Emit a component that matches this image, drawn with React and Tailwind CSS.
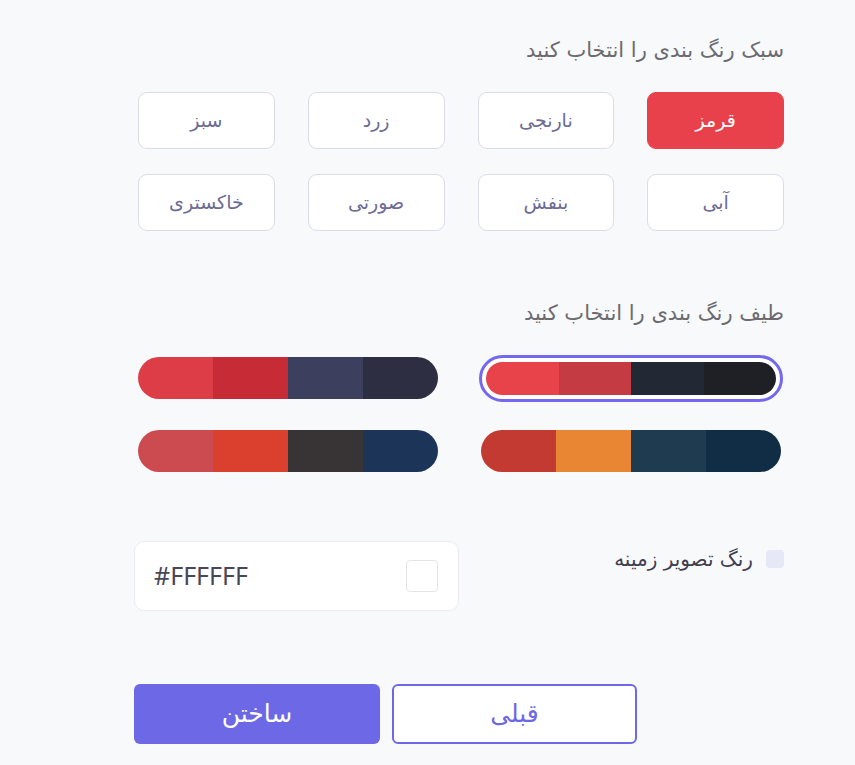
import React from "react";

const styles = [
  { label: "قرمز", active: true },
  { label: "نارنجی" },
  { label: "زرد" },
  { label: "سبز" },
  { label: "آبی" },
  { label: "بنفش" },
  { label: "صورتی" },
  { label: "خاکستری" },
];

const palettes = [
  { colors: ["#e8424b", "#c53b44", "#222834", "#1f2026"], selected: true },
  { colors: ["#dc3d47", "#c72b35", "#3d3f5f", "#2d2e42"] },
  { colors: ["#c33a32", "#e88633", "#1f3b4f", "#112d45"] },
  { colors: ["#cb4b51", "#db3f2d", "#383435", "#1d3459"] },
];

function Bar({ colors, className }) {
  // colors run from the right end of the bar to the left
  return (
    <div className={"flex flex-row-reverse overflow-hidden rounded-full " + className}>
      {colors.map((c, i) => (
        <div key={i} className="flex-1" style={{ backgroundColor: c }} />
      ))}
    </div>
  );
}

export default function App() {
  return (
    <div
      dir="rtl"
      className="min-h-[765px] w-full bg-[#f8f9fb]"
      style={{ fontFamily: '"DejaVu Sans", "Noto Sans", sans-serif' }}
    >
      <div className="mr-[71px] w-[650px] pt-[34px]">
        <h2 className="text-[21px] leading-[32px] text-[#6b6b6f]">سبک رنگ بندی را انتخاب کنید</h2>

        <div className="mt-[26px] grid w-[646px] grid-cols-4 gap-x-[33px] gap-y-[25px]">
          {styles.map((s) => (
            <button
              key={s.label}
              className={
                "flex h-[57px] items-center justify-center rounded-[9px] border text-[19px] " +
                (s.active
                  ? "border-[#e8414b] bg-[#e8414b] text-white"
                  : "border-[#dcdce8] bg-white text-[#6b6b95]")
              }
            >
              {s.label}
            </button>
          ))}
        </div>

        <h2 className="mt-[66px] text-[21px] leading-[32px] text-[#6b6b6f]">طیف رنگ بندی را انتخاب کنید</h2>

        <div className="mt-[28px] grid grid-cols-[300px_300px] gap-x-[43px] gap-y-[31px] pr-[3px]">
          {palettes.map((p, i) => (
            <div key={i} className="flex h-[42px] items-center justify-center">
              {p.selected ? (
                <div className="box-border flex h-[47px] w-[304px] shrink-0 rounded-full border-[3px] border-[#7468ee] bg-white p-[4px]">
                  <Bar colors={p.colors} className="h-full w-full" />
                </div>
              ) : (
                <Bar colors={p.colors} className="h-[42px] w-full" />
              )}
            </div>
          ))}
        </div>

        <div className="mt-[69px] flex items-start justify-between">
          <label className="mt-[3px] flex items-center gap-[13px] text-[20px] text-[#3f3f50]">
            <span className="h-[18px] w-[18px] rounded-[4px] bg-[#e6e7f7]" />
            رنگ تصویر زمینه
          </label>
          <div className="flex h-[70px] w-[325px] items-center justify-between rounded-[10px] border border-[#ececef] bg-white pl-[19px] pr-[20px]">
            <span className="h-[32px] w-[32px] rounded-[4px] border border-[#e4e4e8] bg-white" />
            <span className="text-[25px] text-[#474757]" style={{ fontFamily: '"Noto Sans", sans-serif' }} dir="ltr">
              #FFFFFF
            </span>
          </div>
        </div>

        <div className="mt-[73px] flex justify-end gap-[12px]">
          <button className="flex h-[60px] w-[245px] items-center justify-center rounded-[6px] border-2 border-[#6c68e6] bg-white text-[25px] text-[#6c68e6]">
            قبلی
          </button>
          <button className="flex h-[60px] w-[246px] items-center justify-center rounded-[6px] bg-[#6c68e6] text-[25px] text-white">
            ساختن
          </button>
        </div>
      </div>
    </div>
  );
}
